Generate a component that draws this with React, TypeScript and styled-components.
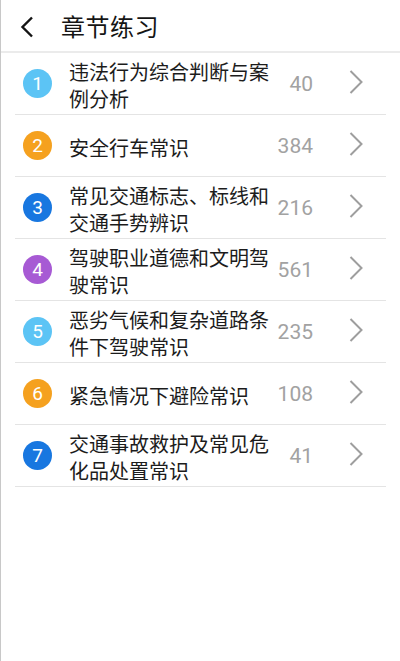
import styled, { createGlobalStyle } from 'styled-components'

const GlobalStyle = createGlobalStyle`
  html, body {
    margin: 0;
    padding: 0;
    background: #ffffff;
  }
  body {
    font-family: Roboto, "Noto Sans CJK SC", sans-serif;
  }
`

const Page = styled.div`
  width: 400px;
  min-height: 661px;
  box-sizing: border-box;
  border-left: 1px solid #c8c8c8;
  background: #fff;
`

const Header = styled.header`
  height: 51px;
  display: flex;
  align-items: center;
  border-bottom: 2px solid #ebebeb;
  padding-left: 19px;
`

const BackButton = styled.div`
  width: 14px;
  height: 22px;
  display: flex;
  align-items: center;
  margin-right: 27px;
  margin-top: 2px;
`

const Title = styled.h1`
  margin: 0;
  font-family: "Noto Sans CJK SC", sans-serif;
  font-size: 24px;
  font-weight: 400;
  color: #141414;
  letter-spacing: 0.5px;
`

const List = styled.ul`
  list-style: none;
  margin: 0;
  padding: 0 14px;
`

const Row = styled.li`
  height: 61px;
  display: flex;
  align-items: center;
  border-bottom: 1px solid #e4e4e4;
  padding: 0 23px 0 8px;
`

const Badge = styled.span<{ $color: string }>`
  width: 29px;
  height: 29px;
  border-radius: 50%;
  background: ${(p) => p.$color};
  color: #fff;
  font-family: Roboto, sans-serif;
  font-size: 19px;
  display: flex;
  align-items: center;
  justify-content: center;
  flex-shrink: 0;
  margin-right: 17px;
`

const Name = styled.span`
  width: 210px;
  font-family: "Noto Sans CJK SC", sans-serif;
  font-size: 20px;
  line-height: 27px;
  color: #1c1c1c;
  padding-top: 3px;
`

const Count = styled.span`
  flex: 1;
  text-align: right;
  font-family: Roboto, sans-serif;
  font-size: 21px;
  color: #a2a2a2;
  margin-right: 36px;
`

const Chevron = styled.svg`
  width: 14px;
  height: 24px;
  flex-shrink: 0;
  margin-top: -4px;
`

const chapters = [
  { name: '违法行为综合判断与案例分析', count: 40, color: '#5cc4f5' },
  { name: '安全行车常识', count: 384, color: '#f5a11f' },
  { name: '常见交通标志、标线和交通手势辨识', count: 216, color: '#1877e0' },
  { name: '驾驶职业道德和文明驾驶常识', count: 561, color: '#a75ad4' },
  { name: '恶劣气候和复杂道路条件下驾驶常识', count: 235, color: '#5cc4f5' },
  { name: '紧急情况下避险常识', count: 108, color: '#f5a11f' },
  { name: '交通事故救护及常见危化品处置常识', count: 41, color: '#1877e0' },
]

export default function App() {
  return (
    <>
      <GlobalStyle />
      <Page>
        <Header>
          <BackButton>
            <svg width="14" height="22" viewBox="0 0 14 22">
              <path d="M12 1.5 L2.5 11 L12 20.5" fill="none" stroke="#141414" strokeWidth="2.4" />
            </svg>
          </BackButton>
          <Title>章节练习</Title>
        </Header>
        <List>
          {chapters.map((c, i) => (
            <Row key={c.name}>
              <Badge $color={c.color}>{i + 1}</Badge>
              <Name>{c.name}</Name>
              <Count>{c.count}</Count>
              <Chevron viewBox="0 0 14 24">
                <path d="M1.5 1 L12.5 12 L1.5 23" fill="none" stroke="#9e9e9e" strokeWidth="2" />
              </Chevron>
            </Row>
          ))}
        </List>
      </Page>
    </>
  )
}
